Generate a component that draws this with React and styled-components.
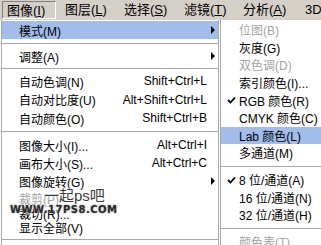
import React from "react";
import styled, { createGlobalStyle } from "styled-components";

const Global = createGlobalStyle`
  html, body { margin: 0; padding: 0; background: #ffffff; overflow: hidden; }
  #root { width: 321px; height: 245px; }
`;

const FONT = `"Liberation Sans", "Noto Sans CJK SC", sans-serif`;

const Screen = styled.div`
  position: relative;
  width: 321px;
  height: 245px;
  overflow: hidden;
  background: #ffffff;
  font-family: ${FONT};
  color: #000;
`;

const MenuBar = styled.div`
  height: 20px;
  background: #d4d0c8;
  display: flex;
  align-items: stretch;
  padding-left: 2px;
  box-sizing: border-box;
  padding-top: 1px;
  padding-bottom: 1px;
`;

const MenuTitle = styled.div`
  width: ${(p) => p.$w}px;
  flex: none;
  box-sizing: border-box;
  padding-left: ${(p) => (p.$active ? 4 : 9)}px;
  font-size: 13px;
  line-height: 17px;
  white-space: nowrap;
  border: ${(p) => (p.$active ? "1px solid" : "0")};
  border-color: #808080 #ffffff #ffffff #808080;
  u { text-decoration: underline; }
`;

const Body = styled.div`
  display: flex;
  align-items: flex-start;
`;

const Menu = styled.div`
  margin-left: 1px;
  width: 218px;
  box-sizing: border-box;
  border-left: 1px solid #a8a8a8;
  border-right: 1px solid #a8a8a8;
  background: #ffffff;
  padding-top: 1px;
  height: 225px;
`;

const SubMenu = styled.div`
  flex: 1;
  margin-left: 1px;
  box-sizing: border-box;
  border-left: 1px solid #a8a8a8;
  background: #ffffff;
  padding-top: 1px;
  height: 225px;
`;

const Row = styled.div`
  height: ${(p) => p.$h || 18}px;
  display: flex;
  align-items: center;
  box-sizing: border-box;
  padding-left: ${(p) => (p.$sub ? 3 : 17)}px;
  padding-right: 3px;
  font-size: 12px;
  white-space: nowrap;
  background: ${(p) => (p.$hl ? "#a3bdea" : "transparent")};
  color: ${(p) => (p.$dis ? "#a4a4a4" : "#000")};
`;

const Check = styled.span`
  width: 14px;
  display: inline-flex;
  justify-content: center;
  margin-right: 1px;
  font-size: 12px;
`;

const Label = styled.span`
  flex: 1;
`;

const Shortcut = styled.span`
  font-size: 12px;
  margin-right: 8px;
`;

const Arrow = styled.span`
  width: 0;
  height: 0;
  border-top: 4px solid transparent;
  border-bottom: 4px solid transparent;
  border-left: 4px solid #000;
  margin-right: 0;
`;

const Sep = styled.div`
  height: ${(p) => p.$h || 8}px;
  display: flex;
  align-items: center;
  &::after {
    content: "";
    display: block;
    width: 100%;
    height: 1px;
    background: #a8a8a8;
  }
`;

const Watermark = styled.div`
  position: absolute;
  left: 10px;
  top: 188px;
  width: 100px;
  pointer-events: none;
`;

const WmTop = styled.div`
  margin-left: 34px;
  font-size: 15px;
  line-height: 16px;
  color: #3a3a3a;
  text-shadow: 0 0 2px #fff, 0 0 2px #fff;
  font-family: ${FONT};
`;

const WmBottom = styled.div`
  font-family: "DejaVu Sans", sans-serif;
  font-weight: bold;
  font-size: 10px;
  line-height: 11px;
  letter-spacing: 0.5px;
  color: #2a2a2a;
  text-shadow: 0 0 2px #888, 0 0 1px #fff;
`;

const CheckMark = () => (
  <svg width="9" height="8" viewBox="0 0 9 8">
    <path d="M1 4 L3.5 6.5 L8 1.5" stroke="#000" strokeWidth="1.8" fill="none" />
  </svg>
);

const titles = [
  ["图像", "I", 54, true],
  ["图层", "L", 59],
  ["选择", "S", 60],
  ["滤镜", "T", 59],
  ["分析", "A", 62],
  ["3D", "", 30],
];

export default function App() {
  return (
    <Screen>
      <Global />
      <MenuBar>
        {titles.map(([t, k, w, a]) => (
          <MenuTitle key={t} $w={w} $active={a}>
            {t}
            {k && (
              <>
                (<u>{k}</u>)
              </>
            )}
          </MenuTitle>
        ))}
      </MenuBar>
      <Body>
        <Menu>
          <Row $hl>
            <Label>模式(M)</Label>
            <Arrow />
          </Row>
          <Sep $h={8} />
          <Row>
            <Label>调整(A)</Label>
            <Arrow />
          </Row>
          <Sep $h={7} />
          <Row>
            <Label>自动色调(N)</Label>
            <Shortcut>Shift+Ctrl+L</Shortcut>
          </Row>
          <Row $h={19}>
            <Label>自动对比度(U)</Label>
            <Shortcut>Alt+Shift+Ctrl+L</Shortcut>
          </Row>
          <Row>
            <Label>自动颜色(O)</Label>
            <Shortcut>Shift+Ctrl+B</Shortcut>
          </Row>
          <Sep $h={9} />
          <Row>
            <Label>图像大小(I)...</Label>
            <Shortcut>Alt+Ctrl+I</Shortcut>
          </Row>
          <Row>
            <Label>画布大小(S)...</Label>
            <Shortcut>Alt+Ctrl+C</Shortcut>
          </Row>
          <Row>
            <Label>图像旋转(G)</Label>
            <Arrow />
          </Row>
          <Row $dis $h={16}>
            <Label>裁剪(P)</Label>
          </Row>
          <Row $h={14}>
            <Label>裁切(R)...</Label>
          </Row>
          <Row $h={14}>
            <Label>显示全部(V)</Label>
          </Row>
          <Sep $h={10} />
        </Menu>
        <SubMenu>
          <Row $sub $dis $h={17.6}>
            <Check />
            <Label>位图(B)</Label>
          </Row>
          <Row $sub $h={17.6}>
            <Check />
            <Label>灰度(G)</Label>
          </Row>
          <Row $sub $dis $h={17.6}>
            <Check />
            <Label>双色调(D)</Label>
          </Row>
          <Row $sub $h={17.6}>
            <Check />
            <Label>索引颜色(I)...</Label>
          </Row>
          <Row $sub $h={17.6}>
            <Check>
              <CheckMark />
            </Check>
            <Label>RGB 颜色(R)</Label>
          </Row>
          <Row $sub $h={17.6}>
            <Check />
            <Label>CMYK 颜色(C)</Label>
          </Row>
          <Row $sub $hl $h={17.6}>
            <Check />
            <Label>Lab 颜色(L)</Label>
          </Row>
          <Row $sub $h={17.6}>
            <Check />
            <Label>多通道(M)</Label>
          </Row>
          <Sep $h={9} />
          <Row $sub $h={17.6}>
            <Check>
              <CheckMark />
            </Check>
            <Label>8 位/通道(A)</Label>
          </Row>
          <Row $sub $h={17.6}>
            <Check />
            <Label>16 位/通道(N)</Label>
          </Row>
          <Row $sub $h={17.6}>
            <Check />
            <Label>32 位/通道(H)</Label>
          </Row>
          <Sep $h={9} />
          <Row $sub $dis $h={17.6}>
            <Check />
            <Label>颜色表(T)...</Label>
          </Row>
        </SubMenu>
      </Body>
      <Watermark>
        <WmTop>一起ps吧</WmTop>
        <WmBottom>WWW.17PS8.COM</WmBottom>
      </Watermark>
    </Screen>
  );
}
